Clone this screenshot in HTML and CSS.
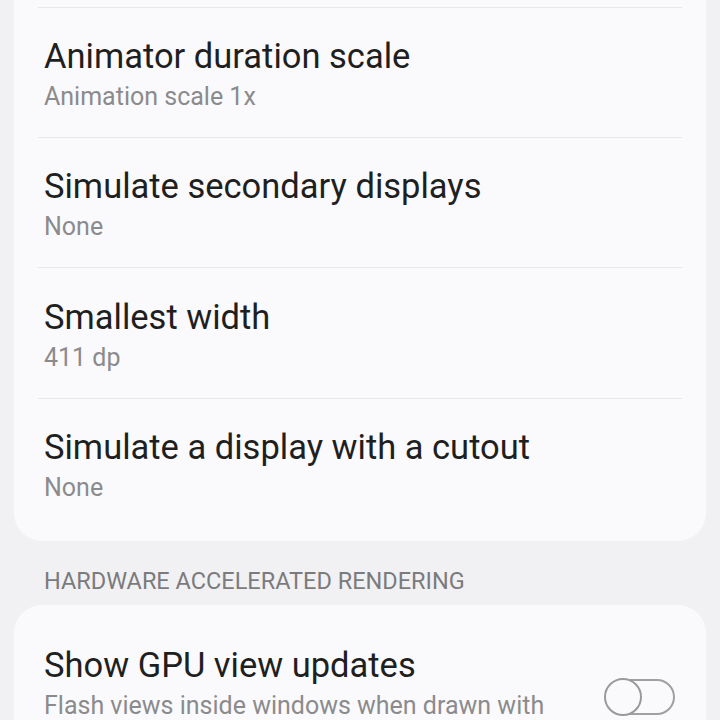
FILE: index.html
```html
<!DOCTYPE html>
<html>
<head>
<meta charset="utf-8" />
<title>Developer options</title>
<meta name="viewport" content="width=device-width,initial-scale=1" />
<link rel="stylesheet" href="styles.css">
</head>
<body>
	<div class="page">
		<div class="card card-top">
			<div class="row">
				<div class="title">Animator duration scale</div>
				<div class="summary">Animation scale 1x</div>
			</div>
			<div class="row">
				<div class="title">Simulate secondary displays</div>
				<div class="summary">None</div>
			</div>
			<div class="row">
				<div class="title">Smallest width</div>
				<div class="summary">411 dp</div>
			</div>
			<div class="row">
				<div class="title">Simulate a display with a cutout</div>
				<div class="summary">None</div>
			</div>
		</div>
		<div class="section">HARDWARE ACCELERATED RENDERING</div>
		<div class="card">
			<div class="row row-switch">
				<div class="text">
					<div class="title">Show GPU view updates</div>
					<div class="summary">Flash views inside windows when drawn with the GPU</div>
				</div>
				<div class="switch"><span class="knob"></span></div>
			</div>
		</div>
	</div>
</body>
</html>
```
FILE: styles.css
```css
* {
	margin: 0;
	padding: 0;
	box-sizing: border-box;
}
html,body {
	width: 100%;
	height: 100%;
	overflow: hidden;
	background: #f1f1f3;
}
body {
	font-family: Roboto, "Noto Sans", sans-serif;
}
.page {
	padding: 0 14px;
}
.card {
	background: #fafafc;
	border-radius: 28px;
	padding: 0 24px;
}
.card-top {
	border-radius: 0 0 28px 28px;
	padding-top: 7px;
	padding-bottom: 13px;
}
.row {
	border-top: 1px solid #e8e8ea;
	padding: 28px 6px 24px;
}
.row + .row {
	padding-top: 28.3px;
}
.title {
	font-size: 34.5px;
	line-height: 40px;
	color: #1f1f1f;
}
.summary {
	margin-top: 5px;
	font-size: 25px;
	line-height: 32px;
	color: #8b8b8d;
}
.section {
	padding: 27px 30px 11px;
	font-size: 23.5px;
	line-height: 26px;
	color: #7b7b7d;
}
.row-switch {
	border-top: none;
	padding-top: 40px;
	display: flex;
	align-items: center;
	justify-content: space-between;
	gap: 40px;
}
.switch {
	flex: none;
	position: relative;
	width: 70px;
	height: 36px;
	margin-right: 1px;
	margin-bottom: 4px;
	border: 2px solid #a0a0a2;
	border-radius: 18px;
}
.knob {
	position: absolute;
	left: -3px;
	top: -3px;
	width: 38px;
	height: 38px;
	border: 2px solid #9a9a9c;
	border-radius: 50%;
	background: #fafafc;
}
```
